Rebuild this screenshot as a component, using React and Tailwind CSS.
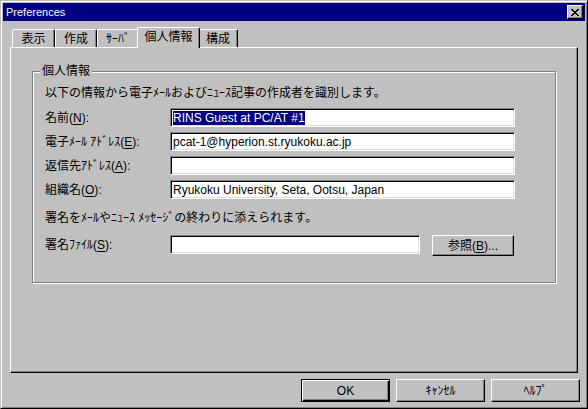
import React from "react";

const font = "font-['Liberation_Sans','Noto_Sans_CJK_JP',sans-serif]";

function Tab({ label, width, active }) {
    if (active) {
        return (
            <div
                className="relative z-10 -mx-[2px] -mb-[1px] flex h-[21px] justify-center rounded-t-[2px] border-l border-t border-r border-white border-r-black bg-[#c0c0c0] pt-[2px] shadow-[inset_-1px_0_0_#808080]"
                style={{ width }}
            >
                <span className="leading-[14px]">{label}</span>
            </div>
        );
    }
    return (
        <div
            className="flex h-[18px] items-center justify-center rounded-t-[2px] border-l border-t border-r border-white border-r-black bg-[#c0c0c0] shadow-[inset_-1px_0_0_#808080]"
            style={{ width }}
        >
            <span className="leading-[14px]">{label}</span>
        </div>
    );
}

function Field({ width = 345, children }) {
    return (
        <div
            className="flex h-[19px] items-center border border-t-[#808080] border-l-[#808080] border-b-white border-r-white bg-white pl-[2px] shadow-[inset_1px_1px_0_#000,inset_-1px_-1px_0_#dfdfdf]"
            style={{ width }}
        >
            {children}
        </div>
    );
}

function Row({ label, mnemonic, children }) {
    return (
        <div className="flex items-start">
            <div className="flex h-[19px] w-[125px] items-center leading-[14px]">
                {label}(<span className="underline underline-offset-[2px]">{mnemonic}</span>):
            </div>
            {children}
        </div>
    );
}

function Button({ children, primary, width = 89, height = 23 }) {
    return (
        <button
            type="button"
            className={
                primary
                    ? "flex items-center justify-center border border-black bg-[#c0c0c0] leading-[14px] shadow-[inset_1px_1px_0_#fff,inset_-1px_-1px_0_#000,inset_-2px_-2px_0_#808080]"
                    : "flex items-center justify-center border border-t-white border-l-white border-b-black border-r-black bg-[#c0c0c0] leading-[14px] shadow-[inset_-1px_-1px_0_#808080]"
            }
            style={{ width, height }}
        >
            {children}
        </button>
    );
}

export default function App() {
    return (
        <div
            className={`${font} flex h-[409px] w-[588px] flex-col border border-t-[#c0c0c0] border-l-[#c0c0c0] border-b-black border-r-black bg-[#c0c0c0] p-[2px] text-[12px] text-black shadow-[inset_1px_1px_0_#fff,inset_-1px_-1px_0_#808080]`}
        >
            {/* Title bar */}
            <div className="flex h-[18px] items-center justify-between bg-[#000080] pl-[3px] pr-[2px]">
                <span className="text-[11px] leading-[14px] text-white">Preferences</span>
                <div className="flex h-[14px] w-[16px] items-center justify-center border border-t-white border-l-white border-b-black border-r-black bg-[#c0c0c0] shadow-[inset_-1px_-1px_0_#808080]">
                    <svg width="8" height="7" viewBox="0 0 8 7" shapeRendering="crispEdges">
                        <path d="M0 0h2v1h1v1h2v-1h1v-1h2v1h-1v1h-1v1h-1v1h1v1h1v1h1v1h-2v-1h-1v-1h-2v1h-1v1h-2v-1h1v-1h1v-1h1v-1h-1v-1h-1v-1h-1z" fill="#000" />
                    </svg>
                </div>
            </div>

            {/* Tabs + panel */}
            <div className="mx-[7px] mt-[6px] flex flex-col">
                <div className="flex h-[20px] items-end pl-[2px]">
                    <Tab label="表示" width={43} />
                    <Tab label="作成" width={42} />
                    <Tab label="ｻｰﾊﾞ" width={42} />
                    <Tab label="個人情報" width={63} active />
                    <Tab label="構成" width={40} />
                </div>
                <div className="h-[326px] border border-t-white border-l-white border-b-black border-r-black pl-[21px] pt-[23px] shadow-[inset_-1px_-1px_0_#808080]">
                    {/* Group box */}
                    <div className="relative h-[212px] w-[524px] border border-[#808080] pl-[12px] pt-[14px] shadow-[inset_1px_1px_0_#fff,1px_1px_0_#fff]">
                        <span className="absolute left-[7px] top-[-8px] bg-[#c0c0c0] px-[2px] leading-[14px]">
                            個人情報
                        </span>
                        <p className="leading-[14px]">
                            以下の情報から電子ﾒｰﾙおよびﾆｭｰｽ記事の作成者を識別します。
                        </p>
                        <div className="mt-[8px] flex flex-col gap-[5px]">
                            <Row label="名前" mnemonic="N">
                                <Field>
                                    <span className="bg-[#000080] leading-[14px] text-white">
                                        RINS Guest at PC/AT #1
                                    </span>
                                </Field>
                            </Row>
                            <Row label="電子ﾒｰﾙ ｱﾄﾞﾚｽ" mnemonic="E">
                                <Field>
                                    <span className="leading-[14px]">pcat-1@hyperion.st.ryukoku.ac.jp</span>
                                </Field>
                            </Row>
                            <Row label="返信先ｱﾄﾞﾚｽ" mnemonic="A">
                                <Field />
                            </Row>
                            <Row label="組織名" mnemonic="O">
                                <Field>
                                    <span className="leading-[14px]">Ryukoku University, Seta, Ootsu, Japan</span>
                                </Field>
                            </Row>
                        </div>
                        <p className="mt-[12px] leading-[14px]">
                            署名をﾒｰﾙやﾆｭｰｽ ﾒｯｾｰｼﾞの終わりに添えられます。
                        </p>
                        <div className="mt-[10px]">
                            <Row label="署名ﾌｧｲﾙ" mnemonic="S">
                                <Field width={250} />
                                <div className="ml-[12px]">
                                    <Button width={82} height={21}>
                                        参照(<span className="underline underline-offset-[2px]">B</span>)...
                                    </Button>
                                </div>
                            </Row>
                        </div>
                    </div>
                </div>
            </div>

            {/* Dialog buttons */}
            <div className="mt-[6px] flex justify-end gap-[6px] pr-[5px]">
                <Button primary>OK</Button>
                <Button>ｷｬﾝｾﾙ</Button>
                <Button>ﾍﾙﾌﾟ</Button>
            </div>
        </div>
    );
}
